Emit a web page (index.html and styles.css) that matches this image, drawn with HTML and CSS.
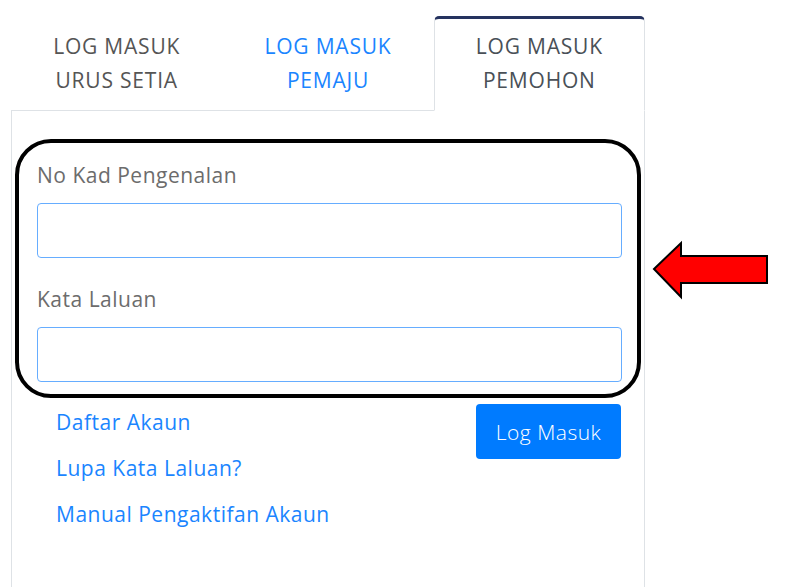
FILE: index.html
```html
<!DOCTYPE html>
<html>
<head>
    <title>Log Masuk Pemohon</title>
    <link rel="stylesheet" href="styles.css">
</head>
<body>
    <div class="login-container">
        <ul class="login-tabs">
            <li class="tab">LOG MASUK<br>URUS SETIA</li>
            <li class="tab tab-link">LOG MASUK<br>PEMAJU</li>
            <li class="tab active">LOG MASUK<br>PEMOHON</li>
        </ul>
        <div class="tab-panel">
            <div class="highlight-box">
                <div class="form-group">
                    <label for="ic">No Kad Pengenalan</label>
                    <input type="text" id="ic">
                </div>
                <div class="form-group">
                    <label for="password">Kata Laluan</label>
                    <input type="password" id="password">
                </div>
            </div>
            <div class="form-footer">
                <div class="links">
                    <a href="#">Daftar Akaun</a>
                    <a href="#">Lupa Kata Laluan?</a>
                    <a href="#">Manual Pengaktifan Akaun</a>
                </div>
                <button type="button" class="btn-login">Log Masuk</button>
            </div>
        </div>
    </div>

    <!-- annotation arrow pointing at the form -->
    <svg class="pointer-arrow" width="120" height="60" viewBox="650 240 120 60">
        <polygon points="654,269 681,243 681,256 767,256 767,283 681,283 681,297" fill="#ff0000" stroke="#000" stroke-width="2" stroke-linejoin="miter"/>
    </svg>
</body>
</html>
```

FILE: styles.css
```css
body {
    margin: 0;
    background-color: #fff;
    font-family: "Open Sans", Lato, sans-serif;
    overflow: hidden;
}
.login-container {
    width: 634px;
    margin-left: 11px;
    padding-top: 16px;
}
.login-tabs {
    display: flex;
    list-style: none;
    margin: 0;
    padding: 0;
    border-bottom: 1px solid #dee2e6;
}
.tab {
    flex: 1;
    text-align: center;
    font-size: 21px;
    font-weight: 500;
    letter-spacing: 0.8px;
    line-height: 34px;
    color: #555;
    padding: 10px 8px 13px;
    border: 1px solid transparent;
    border-top-width: 3px;
    margin-bottom: -1px;
    border-radius: 5px 5px 0 0;
}
.tab-link {
    color: #1a85ff;
}
.tab.active {
    color: #495057;
    background-color: #fff;
    border-color: #dee2e6 #dee2e6 #fff;
    border-top-color: #25335f;
}
.tab-panel {
    border: 1px solid #dee2e6;
    border-top: none;
    height: 500px;
    padding: 28px 1px 0 1px;
}
.highlight-box {
    margin: 0 2px 0 2px;
    border: 4px solid #000;
    border-radius: 36px;
    padding: 18px 15px 12px 18px;
}
.form-group {
    margin-bottom: 27px;
}
.form-group:last-child {
    margin-bottom: 0;
}
.form-group label {
    display: block;
    font-size: 21px;
    letter-spacing: 0.5px;
    line-height: 28px;
    color: #6c6c6c;
    margin-bottom: 14px;
}
.form-group input {
    display: block;
    width: 100%;
    height: 55px;
    box-sizing: border-box;
    border: 1.5px solid #66adff;
    border-radius: 4px;
    outline: none;
}
.form-footer {
    display: flex;
    justify-content: space-between;
    align-items: flex-start;
    padding: 6px 22px 0 43px;
}
.links {
    padding-top: 4px;
}
.links a {
    display: block;
    font-size: 21px;
    letter-spacing: 0.5px;
    line-height: 28px;
    margin-bottom: 18px;
    color: #1a85ff;
    text-decoration: none;
}
.btn-login {
    width: 145px;
    height: 55px;
    background-color: #007bff;
    color: #fff;
    border: none;
    border-radius: 4px;
    font-family: "Open Sans", Lato, sans-serif;
    font-size: 21px;
    font-weight: 300;
    letter-spacing: 0.5px;
}
.pointer-arrow {
    position: absolute;
    left: 650px;
    top: 240px;
}
```
